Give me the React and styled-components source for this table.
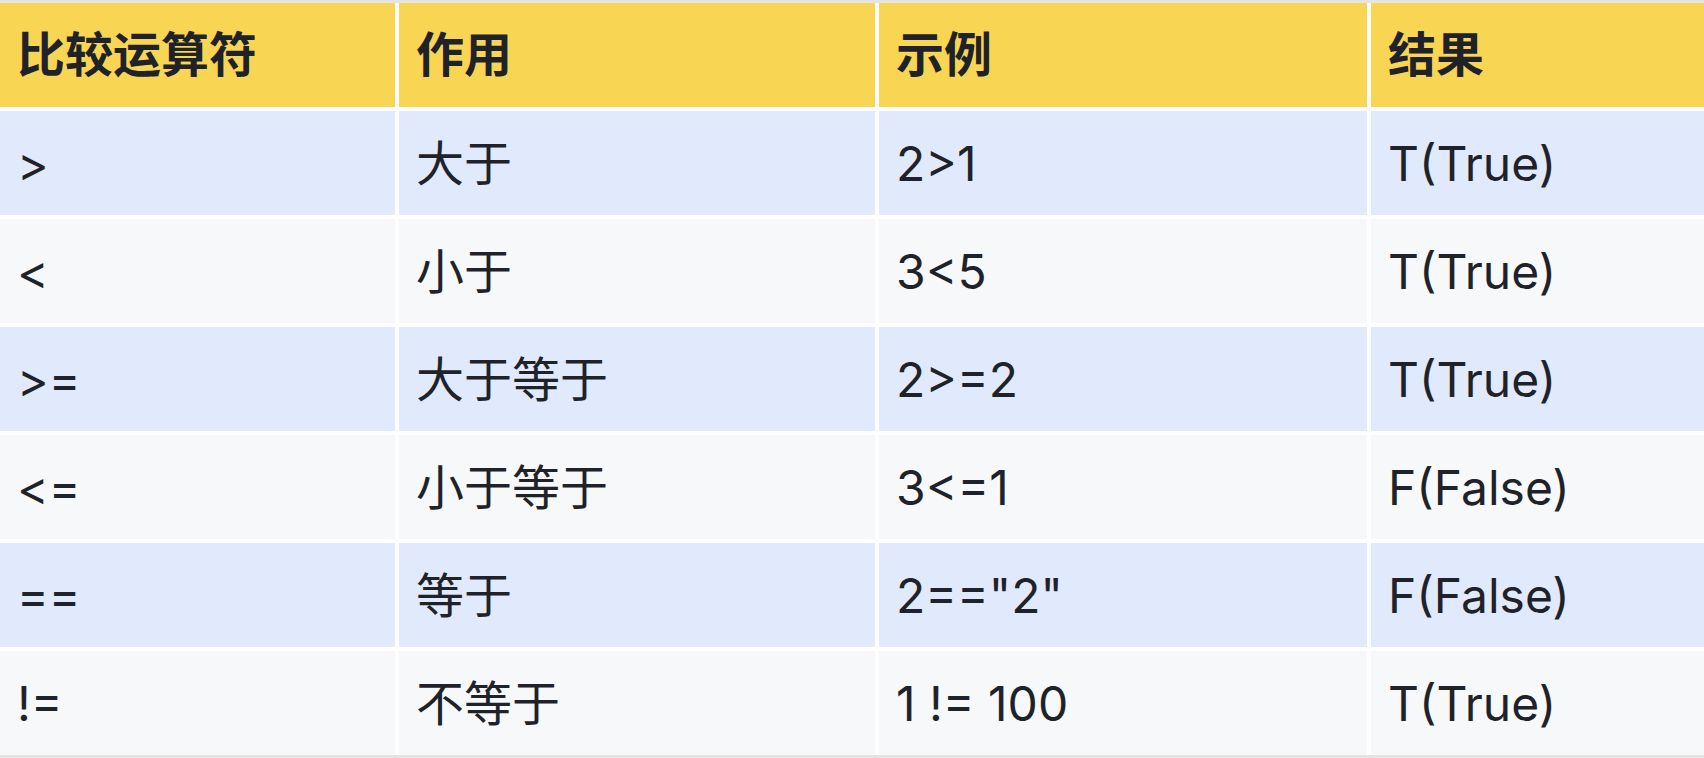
import styled, { createGlobalStyle } from "styled-components";

const GlobalStyle = createGlobalStyle`
  html, body {
    margin: 0;
    padding: 0;
    background: #ffffff;
  }
  body {
    font-family: Inter, "Noto Sans CJK SC", sans-serif;
    color: #1f2329;
  }
`;

const TableWrapper = styled.div`
  width: 1704px;
  height: 758px;
  box-sizing: border-box;
  border-top: 3px solid #e4e4e4;
  border-bottom: 3px solid #e4e4e4;
  background: #ffffff;
  overflow: hidden;
`;

const Grid = styled.div`
  display: grid;
  grid-template-columns: 395px 476px 488px 1fr;
  grid-auto-rows: 104px;
  gap: 4px;
`;

const HeaderCell = styled.div`
  display: flex;
  align-items: center;
  padding-left: 17px;
  background: #f9d554;
  font-size: 48px;
  font-weight: 700;
  line-height: 1;
  color: #1f2329;
`;

const Cell = styled.div`
  display: flex;
  align-items: center;
  padding-left: 17px;
  padding-top: 2px;
  background: ${(props) => (props.$striped ? "#e1e9fc" : "#f7f8fa")};
  font-size: 48px;
  font-weight: 400;
  line-height: 1;
  color: #1f2329;
  white-space: pre;
`;

const headers = ["比较运算符", "作用", "示例", "结果"];

const rows = [
  [">", "大于", "2>1", "T(True)"],
  ["<", "小于", "3<5", "T(True)"],
  [">=", "大于等于", "2>=2", "T(True)"],
  ["<=", "小于等于", "3<=1", "F(False)"],
  ["==", "等于", '2=="2"', "F(False)"],
  ["!=", "不等于", "1 != 100", "T(True)"],
];

const App = () => {
  return (
    <>
      <GlobalStyle />
      <TableWrapper>
        <Grid>
          {headers.map((h) => (
            <HeaderCell key={h}>{h}</HeaderCell>
          ))}
          {rows.map((row, i) =>
            row.map((value, j) => (
              <Cell key={`${i}-${j}`} $striped={i % 2 === 0}>
                {value}
              </Cell>
            ))
          )}
        </Grid>
      </TableWrapper>
    </>
  );
};

export default App;
